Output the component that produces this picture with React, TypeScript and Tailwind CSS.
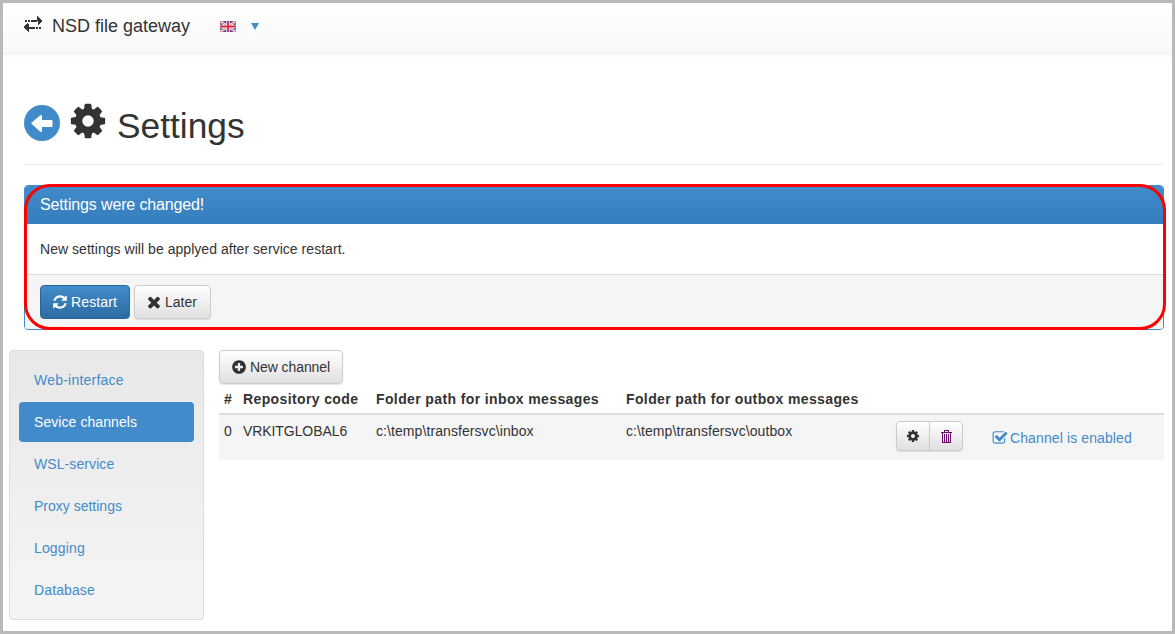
import React from 'react';

const cog = 'M1152 896q0-106-75-181t-181-75-181 75-75 181 75 181 181 75 181-75 75-181zm512-109v222q0 12-8 23t-20 13l-185 28q-19 54-39 91 35 50 107 138 10 12 10 25t-9 23q-27 37-99 108t-94 71q-12 0-26-9l-138-108q-44 23-91 38-16 136-29 186-7 28-36 28h-222q-14 0-24.5-8.5t-11.5-21.5l-28-184q-49-16-90-37l-141 107q-10 9-25 9-14 0-25-11-126-114-165-168-7-10-7-23 0-12 8-23 15-21 51-66.5t54-70.5q-27-50-41-99l-183-27q-13-2-21-12.5t-8-23.5v-222q0-12 8-23t19-13l186-28q14-46 39-92-40-57-107-138-10-12-10-24 0-10 9-23 26-36 98.5-107.5t94.5-71.5q13 0 26 10l138 107q44-23 91-38 16-136 29-186 7-28 36-28h222q14 0 24.5 8.5t11.5 21.5l28 184q49 16 90 37l142-107q9-9 24-9 13 0 25 10 129 119 165 170 7 8 7 22 0 12-8 23-15 21-51 66.5t-54 70.5q26 50 41 98l183 28q13 2 21 12.5t8 23.5z';
const refresh = 'M1639 1056q0 5-1 7-64 268-268 434.5t-478 166.5q-146 0-282.5-55t-243.5-157l-129 129q-19 19-45 19t-45-19-19-45v-448q0-26 19-45t45-19h448q26 0 45 19t19 45-19 45l-137 137q71 66 161 102t187 36q134 0 250-65t186-179q11-17 53-117 8-23 30-23h192q13 0 22.5 9.5t9.5 22.5zm25-800v448q0 26-19 45t-45 19h-448q-26 0-45-19t-19-45 19-45l138-138q-148-137-349-137-134 0-250 65t-186 179q-11 17-53 117-8 23-30 23h-199q-13 0-22.5-9.5t-9.5-22.5v-7q65-268 270-434.5t480-166.5q146 0 284 55.5t245 156.5l130-129q19-19 45-19t45 19 19 45z';
const times = 'M1490 1322q0 40-28 68l-136 136q-28 28-68 28t-68-28l-294-294-294 294q-28 28-68 28t-68-28l-136-136q-28-28-28-68t28-68l294-294-294-294q-28-28-28-68t28-68l136-136q28-28 68-28t68 28l294 294 294-294q28-28 68-28t68 28l136 136q28 28 28 68t-28 68l-294 294 294 294q28 28 28 68z';
const plusCircle = 'M1344 960v-128q0-26-19-45t-45-19h-256v-256q0-26-19-45t-45-19h-128q-26 0-45 19t-19 45v256h-256q-26 0-45 19t-19 45v128q0 26 19 45t45 19h256v256q0 26 19 45t45 19h128q26 0 45-19t19-45v-256h256q26 0 45-19t19-45zm320-64q0 209-103 385.5t-279.5 279.5-385.5 103-385.5-103-279.5-279.5-103-385.5 103-385.5 279.5-279.5 385.5-103 385.5 103 279.5 279.5 103 385.5z';
const checkSquare = 'M1472 930v318q0 119-84.5 203.5t-203.5 84.5h-832q-119 0-203.5-84.5t-84.5-203.5v-832q0-119 84.5-203.5t203.5-84.5h832q63 0 117 25 15 7 18 23 3 17-9 29l-49 49q-10 10-23 10-3 0-9-2-23-6-45-6h-832q-66 0-113 47t-47 113v832q0 66 47 113t113 47h832q66 0 113-47t47-113v-254q0-13 9-22l64-64q10-10 23-10 6 0 12 3 20 8 20 29zm231-489l-814 814q-24 24-57 24t-57-24l-430-430q-24-24-24-57t24-57l110-110q24-24 57-24t57 24l263 263 647-647q24-24 57-24t57 24l110 110q24 24 24 57t-24 57z';

const Icon: React.FC<{ d: string; className?: string }> = ({ d, className }) => (
  <svg viewBox="0 0 1792 1792" fill="currentColor" className={className}>
    <path d={d} />
  </svg>
);

const navItems = [
  { label: 'Web-interface', className: 'tracking-[0.22px]' },
  { label: 'Sevice channels', className: 'tracking-[0.07px]' },
  { label: 'WSL-service', className: 'tracking-[0.09px]' },
  { label: 'Proxy settings', className: '' },
  { label: 'Logging', className: 'tracking-[0.14px]' },
  { label: 'Database', className: 'tracking-[0.12px]' },
];

const btn = 'flex items-center border rounded-[4px] text-[14px] leading-[20px]';
const btnDefault = 'border-[#ccc] bg-gradient-to-b from-white to-[#e0e0e0] text-[#333] shadow-[0_1px_1px_rgba(0,0,0,0.1)]';

export default function App() {
  return (
    <div className="w-[1175px] h-[634px] overflow-hidden border-[3px] border-[#b9b9b9] bg-white text-[14px] leading-[20px] text-[#333] font-['Liberation_Sans',Arial,sans-serif]">
      {/* Navbar */}
      <header className="flex items-center h-[51px] pl-[21px] pb-[4px] bg-gradient-to-b from-white to-[#f8f8f8] border-b border-[#f0f0f0] shadow-[0_1px_5px_rgba(0,0,0,0.04)]">
        <svg viewBox="0 0 18 16" className="w-[18px] h-[16px] mb-[4px] text-[#333]" fill="currentColor" shapeRendering="crispEdges">
          <path d="M1 4h2v2H1zM4 4h2v2H4zM7 4h6v2H7zM13 0h1v1h1v1h1v1h1v1h1v2h-1v1h-1v1h-1v1h-1z" />
          <path d="M5 11h6v2H5zM12 11h2v2h-2zM15 11h2v2h-2zM4 8h1v8H4v-1H3v-1H2v-1H1v-1H0v-2h1v-1h1v-1h1v-1h1z" />
        </svg>
        <span className="ml-[10px] text-[18px] leading-[20px] text-[#333]">NSD file gateway</span>
        <svg viewBox="0 0 16 11" className="ml-[30px] w-[16px] h-[11px]">
          <rect width="16" height="11" fill="#3b4a9c" />
          <path d="M0 0L16 11M16 0L0 11" stroke="#fff" strokeWidth="2.4" />
          <path d="M0 0L16 11M16 0L0 11" stroke="#d8263a" strokeWidth="0.8" />
          <path d="M8 0V11M0 5.5H16" stroke="#fff" strokeWidth="3.4" />
          <path d="M8 0V11M0 5.5H16" stroke="#d8263a" strokeWidth="1.8" />
        </svg>
        <span className="ml-[15px] w-0 h-0 border-l-[4px] border-r-[4px] border-t-[7px] border-l-transparent border-r-transparent border-t-[#428bca]" />
      </header>

      {/* Page title */}
      <div className="ml-[21px] mr-[8px] mt-[50px] h-[61px] flex items-start border-b border-[#eee]">
        <svg viewBox="0 0 36 36" className="w-[36px] h-[36px] mt-[1px]">
          <circle cx="18" cy="18" r="18" fill="#428bca" />
          <path d="M7 18.3L16 10.5Q18 9.5 18 11V15H27.5Q28.5 15 28.5 16V21Q28.5 22 27.5 22H18V26Q18 27.5 16 26.5z" fill="#fff" />
        </svg>
        <Icon d={cog} className="w-[40px] h-[40px] ml-[8px] -mt-[3px] text-[#333]" />
        <h1 className="ml-[9px] mt-[2px] text-[35.3px] leading-[40px] font-normal text-[#333]">Settings</h1>
      </div>

      {/* Settings changed panel */}
      <div className="ml-[21px] mr-[8px] mt-[20px] h-[145px] rounded-[4px] border border-[#428bca] overflow-hidden flex flex-col">
        <div className="h-[38px] px-[15px] flex items-center text-[16px] tracking-[-0.14px] text-white bg-gradient-to-b from-[#428bca] to-[#357ebd]">
          Settings were changed!
        </div>
        <div className="h-[51px] px-[15px] flex items-center bg-white border-b border-[#ddd] tracking-[0.04px]">
          New settings will be applyed after service restart.
        </div>
        <div className="flex-1 bg-[#f5f5f5] px-[15px] pt-[10px] flex items-start gap-[4px]">
          <button className={`${btn} h-[34px] w-[90px] pl-[11px] gap-[3px] border-[#2b669a] bg-gradient-to-b from-[#428bca] to-[#2d6ca2] text-white tracking-[0.12px]`}>
            <Icon d={refresh} className="w-[16px] h-[16px]" />
            Restart
          </button>
          <button className={`${btn} ${btnDefault} h-[34px] w-[77px] pl-[10px] gap-[2px]`}>
            <Icon d={times} className="w-[18px] h-[18px]" />
            Later
          </button>
        </div>
      </div>

      {/* Red annotation over the panel */}
      <div className="absolute left-[24px] top-[184px] w-[1142px] h-[146px] rounded-[26px] border-[3px] border-[#f00] pointer-events-none" />

      {/* Body */}
      <div className="flex mt-[20px] ml-[6px]">
        <nav className="w-[195px] h-[270px] shrink-0 rounded-[4px] border border-[#dcdcdc] bg-gradient-to-b from-[#e8e8e8] to-[#f5f5f5] px-[9px] pt-[9px] flex flex-col gap-[2px]">
          {navItems.map((item, i) => (
            <a
              key={item.label}
              className={`h-[40px] px-[15px] flex items-center rounded-[4px] ${item.className} ${i === 1 ? 'bg-[#428bca] text-white' : 'text-[#428bca]'}`}
            >
              {item.label}
            </a>
          ))}
        </nav>

        <section className="ml-[15px] w-[945px]">
          <button className={`${btn} ${btnDefault} h-[34px] w-[124px] pl-[11px] gap-[3px] tracking-[-0.08px]`}>
            <Icon d={plusCircle} className="w-[16px] h-[16px]" />
            New channel
          </button>
          <div className="flex items-center h-[31px] border-b-[2px] border-[#ddd] font-bold tracking-[0.38px]">
            <span className="w-[24px] pl-[5px]">#</span>
            <span className="w-[133px]">Repository code</span>
            <span className="w-[250px]">Folder path for inbox messages</span>
            <span>Folder path for outbox messages</span>
          </div>
          <div className="flex items-start h-[45px] bg-[#f5f5f5]">
            <span className="w-[24px] pl-[5px] pt-[6px]">0</span>
            <span className="w-[133px] pt-[6px] tracking-[-0.08px]">VRKITGLOBAL6</span>
            <span className="w-[250px] pt-[6px] tracking-[0.08px]">c:\temp\transfersvc\inbox</span>
            <span className="w-[270px] pt-[6px] tracking-[0.08px]">c:\temp\transfersvc\outbox</span>
            <div className={`${btnDefault} mt-[6px] flex h-[30px] w-[67px] rounded-[4px] border`}>
              <span className="w-[33px] flex items-center justify-center border-r border-[#ccc]">
                <Icon d={cog} className="w-[14px] h-[14px]" />
              </span>
              <span className="flex-1 flex items-center justify-center">
                <svg viewBox="0 0 11 13" className="w-[11px] h-[13px] text-[#660f66]" fill="currentColor" shapeRendering="crispEdges">
                  <path d="M3 0h5v1H3zM3 1h1v1H3zM7 1h1v1H7zM0 2h11v1H0zM1 3h1v10H1zM3 4h1v8H3zM5 4h1v8H5zM7 4h1v8H7zM9 3h1v10H9zM2 12h7v1H2z" />
                </svg>
              </span>
            </div>
            <div className="ml-[29px] mt-[13px] flex items-center gap-[2px] text-[#428bca] tracking-[0.11px]">
              <Icon d={checkSquare} className="w-[16px] h-[16px]" />
              Channel is enabled
            </div>
          </div>
        </section>
      </div>
    </div>
  );
}
